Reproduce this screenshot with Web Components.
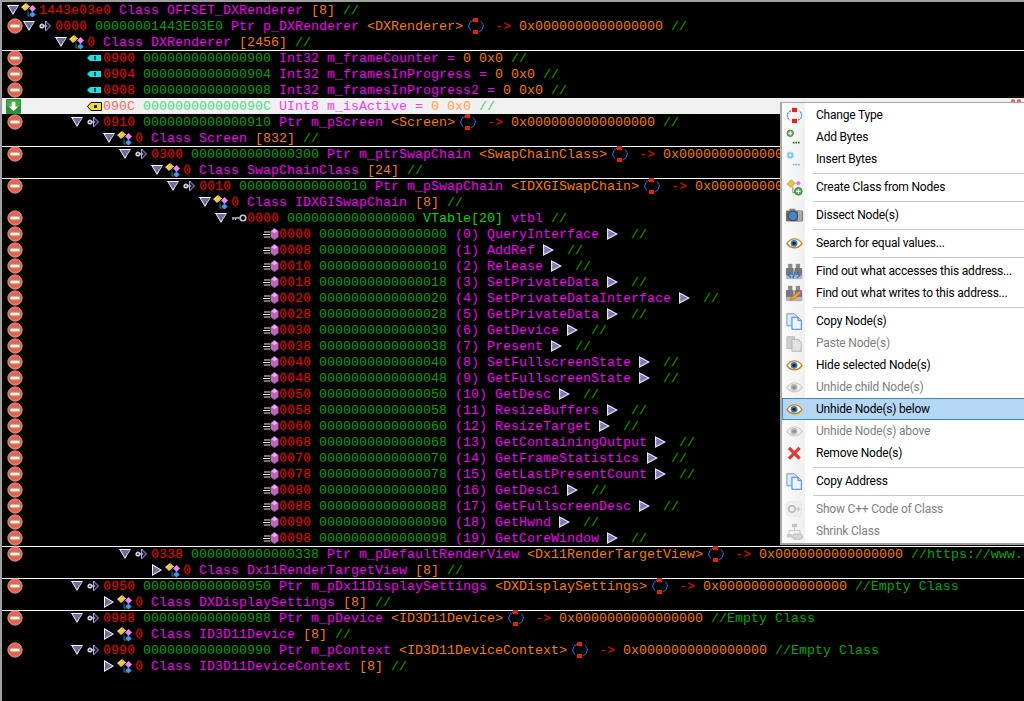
<!DOCTYPE html>
<html>
<head>
<meta charset="utf-8">
<title>ReClass</title>
<style>
  html, body { margin: 0; height: 100%; background: #000; overflow: hidden; }
</style>
</head>
<body>
<class-view></class-view>
<script>
const ICONS = {
  minus: `<svg width="16" height="16" viewBox="0 0 16 16"><circle cx="8" cy="8" r="7" fill="#e2654f" stroke="#f2a48e"/><circle cx="8" cy="8" r="7.2" fill="none" stroke="#b9735f" stroke-width=".6"/><rect x="3.5" y="6.6" width="9" height="2.8" fill="#fff"/></svg>`,
  down: `<svg width="15" height="15" viewBox="0 0 16 16"><rect width="16" height="16" rx="1" fill="#2f8f35"/><rect x="1" y="1" width="14" height="7" fill="#46a84a"/><path d="M6 3h4v5h3l-5 5-5-5h3z" fill="#fff"/></svg>`,
  triDown: `<svg width="12" height="12" viewBox="0 0 12 12"><path d="M0 1h12L6 11z" fill="#fff"/><path d="M1.6 2h9.2L6 9.6z" fill="#6f6f9f"/></svg>`,
  triRight: `<svg width="12" height="12" viewBox="0 0 12 12"><path d="M1 0v12l10-6z" fill="#fff"/><path d="M2 1.8v8.4L9.4 6z" fill="#6f6f9f"/></svg>`,
  cls: `<svg width="16" height="16" viewBox="0 0 16 16"><path d="M7 9v5h3" fill="none" stroke="#3a6fa8"/><path d="M0 5l5-4 4 3.500-5 4.500z" fill="#f0c83c"/><path d="M1.500 5l3.500-3" stroke="#fff2a8"/><path d="M11.500 3l3.500 3.500-3.500 3.500-3.500-3.500z" fill="#e88ce8"/><path d="M11.500 9.500l3.200 3-3.200 3-3.200-3z" fill="#3c9ae8"/></svg>`,
  ptr: `<svg width="12" height="12" viewBox="0 0 12 12"><circle cx="3" cy="6" r="2.6" fill="#c8c8d8"/><circle cx="3" cy="6" r="1" fill="#555"/><path d="M6.500 1l5 5-5 5z" fill="#22224a" stroke="#a8a8e0"/><path d="M5 6h3" stroke="#d8d8f0"/></svg>`,
  int: `<svg width="14" height="8" viewBox="0 0 14 8"><path d="M3 1h11v6H3L0 4z" fill="#1ce0e0"/><rect x="7" y="2" width="2" height="4" fill="#045"/></svg>`,
  uint: `<svg width="15" height="9" viewBox="0 0 15 9"><path d="M4 .5h10.500v8H4L.5 4.500z" fill="#f0e020" stroke="#000"/><rect x="7" y="3" width="3" height="3" fill="#222"/></svg>`,
  swap: `<svg width="16" height="16" viewBox="0 0 16 16"><path d="M5 2.500C2 3.500.8 5.500.8 8c0 2 .8 3.500 2.400 4.800M11 13.500c3-1 4.200-3 4.200-5.500 0-2-.8-3.500-2.400-4.800" fill="none" stroke="#3a78e8"/><rect x="5" y="0" width="5" height="4" fill="#e02020"/><rect x="5" y="12" width="5" height="4" fill="#e02020"/></svg>`,
  key: `<svg width="16" height="10" viewBox="0 0 16 10"><circle cx="12" cy="5" r="2.800" fill="none" stroke="#c8c8d0" stroke-width="1.600"/><path d="M1 5h8M2 5v2M4.500 5v2" stroke="#b0b0b8" stroke-width="1.300"/></svg>`,
  fn: `<svg width="16" height="12" viewBox="0 0 16 12"><path d="M1 4h6M0 6.500h7M1 9h6" stroke="#e8e8c8"/><path d="M11.500 0l4 3v6l-4 3-4-3V3z" fill="#c060c0"/><path d="M11.500 .8l3 2.400-3 2-3-2z" fill="#eea8ee"/></svg>`,
  fnTri: `<svg width="11" height="12" viewBox="0 0 11 12"><path d="M0 0v12l11-6z" fill="#e0e0f0"/><path d="M1.200 2v8l7.500-4z" fill="#7c7cac"/></svg>`,
  mChange: `<svg width="20" height="20" viewBox="0 0 20 20"><path d="M6 4.500C3 5.500 1.500 7.500 1.500 10s1.500 4.500 3 5.500M14 15.500c3-1 4.500-3 4.500-5.500s-1.500-4.500-3-5.500" fill="none" stroke="#3a78e8" stroke-width="1.200" stroke-dasharray="2.500 .8"/><rect x="7" y="1" width="6" height="5" fill="#e52222"/><rect x="7" y="14" width="6" height="5" fill="#e52222"/></svg>`,
  mAdd: `<svg width="20" height="20" viewBox="0 0 20 20"><circle cx="5" cy="5" r="3.800" fill="#6fb56f" stroke="#3d7d3d"/><path d="M3 5h4M5 3v4" stroke="#fff" stroke-width="1.300"/><path d="M8 16h2M11 16h2M14 16h2" stroke="#2d6f14" stroke-width="2"/></svg>`,
  mInsert: `<svg width="20" height="20" viewBox="0 0 20 20"><rect x="1.500" y="1.500" width="7" height="7" rx="2" fill="#6cc0ee" stroke="#a6d8f5"/><path d="M3 5h4M5 3v4" stroke="#fff" stroke-width="1.300"/><path d="M8 16h2M11 16h2M14 16h2" stroke="#68bdf2" stroke-width="2"/></svg>`,
  mCreate: `<svg width="20" height="20" viewBox="0 0 20 20"><path d="M8 9v7h4" fill="none" stroke="#777"/><path d="M1 6l5-5 5 4-5 5z" fill="#edc436" stroke="#a88a1c" stroke-width=".6"/><path d="M14.500 2l3 3-3 3-3-3z" fill="#e078e0"/><circle cx="14.500" cy="14.500" r="4.500" fill="#56a85c" stroke="#2f7f38"/><path d="M12 14.500h5M14.500 12v5" stroke="#fff" stroke-width="1.300"/></svg>`,
  mCam: `<svg width="20" height="20" viewBox="0 0 20 20"><rect x="4" y="2" width="7" height="3" fill="#8a8a8a"/><rect x="0" y="4" width="20" height="13" rx="1.500" fill="#6f6f72"/><rect x="14" y="4" width="5" height="13" fill="#a9a9a9"/><circle cx="8" cy="10.500" r="5.600" fill="#4d82c4" stroke="#39393c"/></svg>`,
  eye: `<svg width="20" height="20" viewBox="0 0 20 20"><path d="M1 10c3-4.500 6-5.500 9-5.500s6 1 9 5.500c-3 4-6 5-9 5s-6-1-9-5z" fill="#fff" stroke="#c8861c" stroke-width="1.500"/><circle cx="9.500" cy="9.800" r="4" fill="#3e7ca6"/><circle cx="9.500" cy="9.800" r="2" fill="#14283c"/></svg>`,
  eyeOff: `<svg width="20" height="20" viewBox="0 0 20 20"><path d="M1 10c3-4.500 6-5.500 9-5.500s6 1 9 5.500c-3 4-6 5-9 5s-6-1-9-5z" fill="#f4f4f4" stroke="#cfcfcf" stroke-width="1.500"/><circle cx="9.500" cy="9.800" r="4" fill="#b4b4b4"/><circle cx="9.500" cy="9.800" r="2" fill="#8c8c8c"/></svg>`,
  binA: `<svg width="20" height="20" viewBox="0 0 20 20"><rect x="2.500" y="1" width="5" height="5" fill="#8a8a8a"/><rect x="11.500" y="1" width="5" height="5" fill="#8a8a8a"/><rect x="0" y="6" width="9" height="12" rx="1" fill="#77777a"/><rect x="10" y="6" width="9" height="12" rx="1" fill="#77777a"/><rect x="0" y="14" width="19" height="5" fill="#b4b4b8"/><path d="M6 11l-3.500 3 3.500 3M13 11l3.500 3-3.500 3M11 10l-3 8" fill="none" stroke="#1c7ad8" stroke-width="1.600"/></svg>`,
  binW: `<svg width="20" height="20" viewBox="0 0 20 20"><rect x="2.500" y="1" width="5" height="5" fill="#8a8a8a"/><rect x="11.500" y="1" width="5" height="5" fill="#8a8a8a"/><rect x="0" y="6" width="9" height="12" rx="1" fill="#77777a"/><rect x="10" y="6" width="9" height="12" rx="1" fill="#77777a"/><rect x="0" y="14" width="19" height="5" fill="#b4b4b8"/><path d="M5 18l1-3 9-8 3 2-9 8z" fill="#eda32c" stroke="#8a5a14" stroke-width=".6"/><path d="M15 7l2-1.500 2 2-1 1.500z" fill="#d858b8"/></svg>`,
  copy: `<svg width="20" height="20" viewBox="0 0 20 20"><path d="M1 1h9l3 3v11H1z" fill="#dce9f8" stroke="#5b8fd0"/><path d="M7 5h7l4 4v10H7z" fill="#eef5fd" stroke="#4a82cc" stroke-width="1.200"/><path d="M14 5v4h4" fill="#bcd5f0" stroke="#4a82cc"/></svg>`,
  paste: `<svg width="20" height="20" viewBox="0 0 20 20"><path d="M1 2h9v14H1z" fill="#d0d0d0" stroke="#b8b8b8"/><path d="M7 5h7l4 4v10H7z" fill="#e2e2e2" stroke="#b4b4b4" stroke-width="1.200"/></svg>`,
  cross: `<svg width="20" height="20" viewBox="0 0 20 20"><path d="M3.500 3.500L16 16M16 3.500L3.500 16" stroke="#e5383b" stroke-width="3.800"/></svg>`,
  cpp: `<svg width="20" height="20" viewBox="0 0 20 20"><rect x="1" y="1" width="17" height="17" rx="3" fill="#f0f0f0" stroke="#e4e4e4"/><circle cx="7" cy="9.500" r="3.800" fill="none" stroke="#bdbdbd" stroke-width="2"/><path d="M12 9.500h5M14.500 7v5" stroke="#c4c4c4" stroke-width="1.400"/></svg>`,
  shrink: `<svg width="20" height="20" viewBox="0 0 20 20"><rect x="7" y="1" width="6" height="4" fill="#c2c2c2"/><path d="M10 5v4M3.500 13V9h13v4" fill="none" stroke="#c2c2c2"/><rect x="1" y="13" width="6" height="4" fill="#c6c6c6"/><rect x="8" y="13" width="11" height="6" rx="2" fill="#d6d6d6" stroke="#b4b4b4"/></svg>`
};

class RcIcon extends HTMLElement {
  connectedCallback() {
    this.attachShadow({ mode: 'open' });
    this.shadowRoot.innerHTML = `
      <style>
        :host { display: inline-flex; align-items: center; justify-content: center; }
        svg { display: block; }
        :host([sized]) svg { width: 17px; height: 17px; }
      </style>
      ${ICONS[this.getAttribute('name')] || ''}
    `;
  }
}
customElements.define('rc-icon', RcIcon);

class TreeRow extends HTMLElement {
  connectedCallback() {
    const x = Number(this.getAttribute('x'));
    const btn = this.getAttribute('btn');
    const tri = this.getAttribute('tri');
    const icon = this.getAttribute('icon');
    // icons sit a little left of the middle of their cell
    const shift = { cls: 2, ptr: 2, int: 1, uint: 1 }[icon] || 0;
    this.attachShadow({ mode: 'open' });
    this.shadowRoot.innerHTML = `
      <style>
        :host {
          display: flex;
          height: 16px;
          white-space: nowrap;
        }
        :host([line]) { box-shadow: inset 0 1px #fff; }
        :host([selected]) { background: #f0f0f0; }
        .gutter { flex: none; width: 0; display: flex; align-items: center; }
        .gutter rc-icon { flex: none; margin-left: ${btn === 'down' ? 4 : 5}px; }
        .indent { flex: none; width: ${x - 32 - 2}px; }
        .tri { flex: none; width: 16px; display: flex; align-items: center; }
        .ico { flex: none; width: 16px; display: flex; justify-content: center; align-items: center; margin-left: ${-shift}px; margin-right: ${shift}px; }
        .text { flex: none; line-height: 16px; padding-top: 1px; }
      </style>
      <div class="gutter">${btn ? `<rc-icon name="${btn === 'down' ? 'down' : 'minus'}"></rc-icon>` : ''}</div>
      <div class="indent"></div>
      <div class="tri">${tri ? `<rc-icon name="${tri === 'right' ? 'triRight' : 'triDown'}"></rc-icon>` : ''}</div>
      <div class="ico">${icon ? `<rc-icon name="${icon}"></rc-icon>` : ''}</div>
      <div class="text"><slot></slot></div>
    `;
  }
}
customElements.define('tree-row', TreeRow);

class ClassView extends HTMLElement {
  connectedCallback() {
    const o = s => `<span class="o">${s}</span>`;
    const a = s => `<span class="a">${s}</span>`;
    const t = s => `<span class="t">${s}</span>`;
    const v = s => `<span class="v">${s}</span>`;
    const c = s => `<span class="c">${s}</span>`;
    const swap = `<rc-icon class="swap" name="swap"></rc-icon>`;
    const next = `<rc-icon class="next" name="fnTri"></rc-icon>`;
    const NULL = '0x0000000000000000';

    const cls = (x, name, size, tri) => ({ x, tri: tri || 'down', icon: 'cls',
      html: `${o('0')} ${t('Class ' + name)} ${v('[' + size + ']')} ${c('//')}` });
    const ptr = (x, off, addr, name, type, note, line, val) => ({ x, btn: 'minus', tri: 'down', icon: 'ptr', line,
      html: `${o(off)} ${a(addr)} ${t('Ptr ' + name)} ${v('&lt;' + type + '&gt;')}${swap}<span class="arrow">-&gt;</span> ${v(val || NULL)}${note ? ' ' + c(note) : ''}` });
    const num = (off, addr, type, name, dec, line) => ({ x: 103, btn: 'minus', icon: 'int', line,
      html: `${o(off)} ${a(addr)} ${t(type + ' ' + name + ' =')} ${v(dec)} ${v('0x0')} ${c('//')}` });

    const fns = ['QueryInterface', 'AddRef', 'Release', 'SetPrivateData', 'SetPrivateDataInterface',
      'GetPrivateData', 'GetDevice', 'Present', 'SetFullscreenState', 'GetFullscreenState', 'GetDesc',
      'ResizeBuffers', 'ResizeTarget', 'GetContainingOutput', 'GetFrameStatistics', 'GetLastPresentCount',
      'GetDesc1', 'GetFullscreenDesc', 'GetHwnd', 'GetCoreWindow'];

    const rows = [
      { x: 39, tri: 'down', icon: 'cls', html: `${o('1443e03e0')} ${t('Class OFFSET_DXRenderer')} ${v('[8]')} ${c('//')}` },
      ptr(55, '0000', '00000001443E03E0', 'p_DXRenderer', 'DXRenderer', '//'),
      cls(87, 'DXRenderer', 2456),
      num('0900', '0000000000000900', 'Int32', 'm_frameCounter', '0', true),
      num('0904', '0000000000000904', 'Int32', 'm_framesInProgress', '0'),
      num('0908', '0000000000000908', 'Int32', 'm_framesInProgress2', '0'),
      { x: 103, btn: 'down', icon: 'uint', selected: true,
        html: `${o('090C')} ${a('000000000000090C')} ${t('UInt8 m_isActive =')} ${v('0')} ${v('0x0')} ${c('//')}` },
      ptr(103, '0910', '0000000000000910', 'm_pScreen', 'Screen', '//'),
      cls(135, 'Screen', 832),
      // the last two pointers run under the menu, only the visible digits are kept
      ptr(151, '0300', '0000000000000300', 'm_ptrSwapChain', 'SwapChainClass', '', true, NULL.slice(0, 15)),
      cls(183, 'SwapChainClass', 24),
      ptr(199, '0010', '0000000000000010', 'm_pSwapChain', 'IDXGISwapChain', '', true, NULL.slice(0, 11)),
      cls(231, 'IDXGISwapChain', 8),
      { x: 247, btn: 'minus', tri: 'down', icon: 'key',
        html: `${o('0000')} ${a('0000000000000000')} <span class="g">VTable[20]</span> ${t('vtbl')} ${c('//')}` },
      ...fns.map((name, i) => {
        const hex = (i * 8).toString(16).toUpperCase();
        return { x: 279, btn: 'minus', icon: 'fn',
          html: `${o(hex.padStart(4, '0'))} ${a(hex.padStart(16, '0'))} ${t('(' + i + ') ' + name)}${next}${c('//')}` };
      }),
      ptr(151, '0338', '0000000000000338', 'm_pDefaultRenderView', 'Dx11RenderTargetView', '//https://www.u', true),
      cls(183, 'Dx11RenderTargetView', 8, 'right'),
      ptr(103, '0950', '0000000000000950', 'm_pDx11DisplaySettings', 'DXDisplaySettings', '//Empty Class', true),
      cls(135, 'DXDisplaySettings', 8, 'right'),
      ptr(103, '0988', '0000000000000988', 'm_pDevice', 'ID3D11Device', '//Empty Class', true),
      cls(135, 'ID3D11Device', 8, 'right'),
      ptr(103, '0990', '0000000000000990', 'm_pContext', 'ID3D11DeviceContext', '//Empty Class'),
      cls(135, 'ID3D11DeviceContext', 8, 'right')
    ];

    this.attachShadow({ mode: 'open' });
    this.shadowRoot.innerHTML = `
      <style>
        :host {
          display: block;
          box-sizing: border-box;
          height: 701px;
          border-top: 2px solid #a0a0a0;
          border-left: 2px solid #a0a0a0;
          background: #000;
          color: #fff;
          font-family: "Liberation Mono", monospace;
          font-size: 13.333px;
          overflow: hidden;
        }
        .o { color: #f00000; }
        .a { color: #00a000; }
        .t { color: #f000f0; }
        .v { color: #f57a00; }
        .c { color: #00a800; }
        .g { color: #00d800; }
        .arrow { color: #f00000; }
        .swap { width: 32px; padding-right: 6px; box-sizing: border-box; vertical-align: -4px; margin-top: -2px; }
        .next { width: 32px; padding-right: 4px; box-sizing: border-box; vertical-align: -2px; }
        tree-row[selected] .o, tree-row[selected] .arrow { color: #ff6868; }
        tree-row[selected] .a { color: #48e088; }
        tree-row[selected] .t { color: #f040f0; }
        tree-row[selected] .v { color: #ffa050; }
        tree-row[selected] .c { color: #50d070; }
        .spots { position: absolute; left: 1011px; top: 99px; display: flex; gap: 2px; }
        .spots i { width: 4px; height: 3px; border-radius: 2px 2px 0 0; background: #e8685a; }
        context-menu { position: absolute; left: 780px; top: 102px; }
      </style>
      ${rows.map(r => `<tree-row x="${r.x}"${r.btn ? ` btn="${r.btn}"` : ''}${r.tri ? ` tri="${r.tri}"` : ''}${r.icon ? ` icon="${r.icon}"` : ''}${r.line ? ' line' : ''}${r.selected ? ' selected' : ''}>${r.html}</tree-row>`).join('')}
      <div class="spots"><i></i><i></i></div>
      <context-menu>
        <menu-item icon="mChange">Change Type</menu-item>
        <menu-item icon="mAdd">Add Bytes</menu-item>
        <menu-item icon="mInsert">Insert Bytes</menu-item>
        <menu-sep></menu-sep>
        <menu-item icon="mCreate">Create Class from Nodes</menu-item>
        <menu-sep></menu-sep>
        <menu-item icon="mCam">Dissect Node(s)</menu-item>
        <menu-sep></menu-sep>
        <menu-item icon="eye">Search for equal values...</menu-item>
        <menu-sep></menu-sep>
        <menu-item icon="binA">Find out what accesses this address...</menu-item>
        <menu-item icon="binW">Find out what writes to this address...</menu-item>
        <menu-sep></menu-sep>
        <menu-item icon="copy">Copy Node(s)</menu-item>
        <menu-item icon="paste" disabled>Paste Node(s)</menu-item>
        <menu-item icon="eye">Hide selected Node(s)</menu-item>
        <menu-item icon="eyeOff" disabled>Unhide child Node(s)</menu-item>
        <menu-item icon="eye" active>Unhide Node(s) below</menu-item>
        <menu-item icon="eyeOff" disabled>Unhide Node(s) above</menu-item>
        <menu-item icon="cross">Remove Node(s)</menu-item>
        <menu-sep></menu-sep>
        <menu-item icon="copy">Copy Address</menu-item>
        <menu-sep></menu-sep>
        <menu-item icon="cpp" disabled>Show C++ Code of Class</menu-item>
        <menu-item icon="shrink" disabled>Shrink Class</menu-item>
      </context-menu>
    `;
  }
}

class ContextMenu extends HTMLElement {
  connectedCallback() {
    this.attachShadow({ mode: 'open' });
    this.shadowRoot.innerHTML = `
      <style>
        :host {
          display: block;
          box-sizing: border-box;
          width: 262px;
          padding: 2px 0 1px 2px;
          background: linear-gradient(90deg, #fbfbfb 0, #f0f0f0 23px, #fff 23px) no-repeat 2px 0 / 100% 100%, #fff;
          box-shadow: inset 2px 0 #a9a9a9, inset 0 1px #a9a9a9;
          border-bottom: 2px solid #a0a0a0;
          font-family: Roboto, "Noto Sans", sans-serif;
          font-size: 12px;
          letter-spacing: -0.2px;
          color: #000;
        }
      </style>
      <slot></slot>
    `;
  }
}
customElements.define('context-menu', ContextMenu);

class MenuItem extends HTMLElement {
  connectedCallback() {
    this.attachShadow({ mode: 'open' });
    this.shadowRoot.innerHTML = `
      <style>
        :host {
          display: flex;
          align-items: center;
          box-sizing: border-box;
          height: 22px;
          border: 1px solid transparent;
          white-space: nowrap;
        }
        :host([disabled]) { color: #808080; }
        :host([active]) { background: #b5d7f3; border-color: #2a8fdc; }
        .ic { flex: none; width: 22px; margin-right: 11px; display: flex; justify-content: center; }
      </style>
      <div class="ic"><rc-icon sized name="${this.getAttribute('icon')}"></rc-icon></div>
      <slot></slot>
    `;
  }
}
customElements.define('menu-item', MenuItem);

class MenuSep extends HTMLElement {
  connectedCallback() {
    this.attachShadow({ mode: 'open' });
    this.shadowRoot.innerHTML = `
      <style>
        :host { display: block; height: 6px; padding: 3px 0 0 31px; box-sizing: border-box; }
        div { height: 1px; background: #c8c8c8; }
      </style>
      <div></div>
    `;
  }
}
customElements.define('menu-sep', MenuSep);

customElements.define('class-view', ClassView);
</script>
</body>
</html>
